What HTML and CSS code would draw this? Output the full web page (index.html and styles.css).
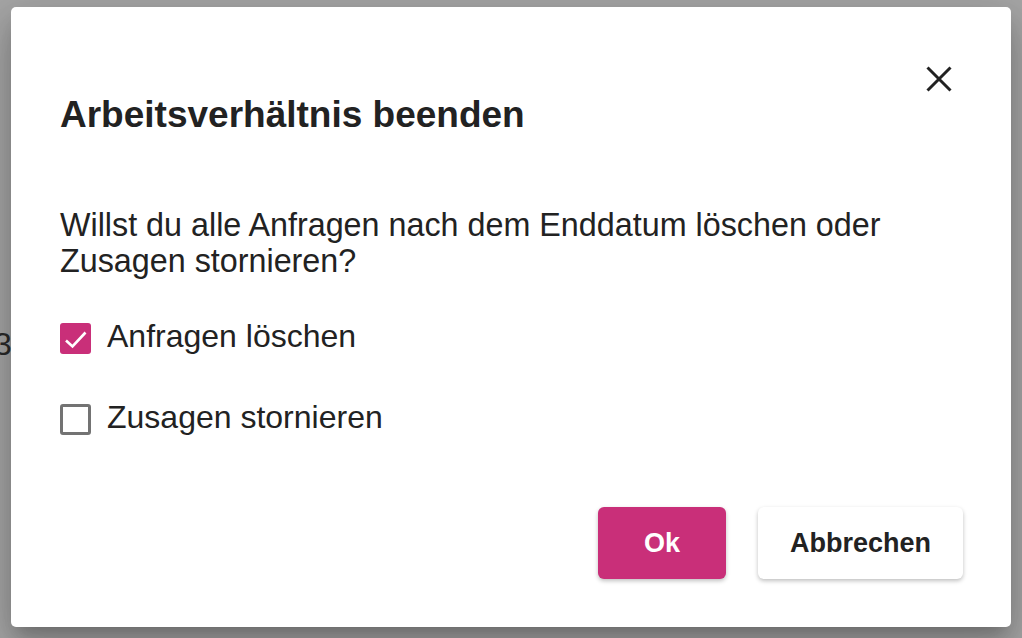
FILE: index.html
```html
<!DOCTYPE html>
<html lang="de">
<head>
  <meta charset="UTF-8" />
  <title>Arbeitsverhältnis beenden</title>
  <link rel="stylesheet" href="styles.css">
</head>
<body>
  <div class="backdrop">
    <span class="behind">3</span>
    <div class="dialog">
      <div class="dialog-head">
        <h2>Arbeitsverhältnis beenden</h2>
        <button class="close-btn" aria-label="Schließen">
          <svg width="48" height="48" viewBox="0 0 48 48">
            <path d="M12.5 12.5 L35.5 35.5 M35.5 12.5 L12.5 35.5" stroke="#222" stroke-width="3" fill="none" />
          </svg>
        </button>
      </div>
      <p class="question">Willst du alle Anfragen nach dem Enddatum löschen oder Zusagen stornieren?</p>
      <label class="check-row first">
        <span class="box checked">
          <svg width="31" height="31" viewBox="0 0 31 31">
            <polyline points="6,17.5 12.5,23.5 25.5,9.5" stroke="#fff" stroke-width="2.6" fill="none" />
          </svg>
        </span>
        <span class="label-text">Anfragen löschen</span>
      </label>
      <label class="check-row second">
        <span class="box"></span>
        <span class="label-text">Zusagen stornieren</span>
      </label>
      <div class="actions">
        <button class="btn btn-ok">Ok</button>
        <button class="btn btn-cancel">Abbrechen</button>
      </div>
    </div>
  </div>
</body>
</html>
```

FILE: styles.css
```css
html, body {
  margin: 0;
  padding: 0;
}
body {
  font-family: 'Liberation Sans', Arial, sans-serif;
  color: #222;
}
.backdrop {
  position: relative;
  height: 638px;
  background: #a6a6a6;
  padding: 7px 11px 11px 11px;
  box-sizing: border-box;
  overflow: hidden;
}
.behind {
  position: absolute;
  left: -6px;
  top: 326px;
  font-size: 32px;
  line-height: 36px;
  color: #2a2a2a;
}
.dialog {
  position: relative;
  width: 1000px;
  height: 620px;
  box-sizing: border-box;
  background: #fff;
  border-radius: 5px;
  padding: 48px 48px 48px 49px;
  display: flex;
  flex-direction: column;
  box-shadow: 0 11px 15px -7px rgba(0,0,0,0.2), 0 24px 38px 3px rgba(0,0,0,0.14), 0 9px 46px 8px rgba(0,0,0,0.12);
}
.dialog-head {
  display: flex;
  justify-content: space-between;
  align-items: flex-start;
  height: 82px;
}
.dialog-head h2 {
  margin: 38px 0 0 0;
  font-size: 37px;
  line-height: 44px;
  font-weight: bold;
  color: #222;
}
.close-btn {
  width: 48px;
  height: 48px;
  padding: 0;
  border: none;
  background: none;
  cursor: pointer;
}
.close-btn svg {
  display: block;
}
.question {
  margin: 70px 0 0 0;
  font-size: 32.3px;
  line-height: 36px;
  max-width: 860px;
}
.check-row {
  display: flex;
  align-items: flex-start;
  gap: 16px;
  font-size: 32px;
  line-height: 36px;
  cursor: pointer;
}
.check-row.first {
  margin-top: 39px;
}
.check-row.second {
  margin-top: 45px;
}
.box {
  width: 31px;
  height: 31px;
  margin-top: 5px;
  box-sizing: border-box;
  border: 3px solid #737373;
  border-radius: 3px;
  flex-shrink: 0;
}
.box.checked {
  border: none;
  background: #c92f79;
}
.box svg {
  display: block;
}
.actions {
  margin-top: 72px;
  display: flex;
  justify-content: flex-end;
  gap: 32px;
}
.btn {
  height: 72px;
  border: none;
  border-radius: 6px;
  font-family: 'Liberation Sans', Arial, sans-serif;
  font-size: 27px;
  font-weight: bold;
  cursor: pointer;
  box-shadow: 0 2px 4px rgba(0,0,0,0.25);
}
.btn-ok {
  width: 128px;
  background: #c92f79;
  color: #fff;
}
.btn-cancel {
  width: 205px;
  background: #fff;
  color: #222;
}
```
